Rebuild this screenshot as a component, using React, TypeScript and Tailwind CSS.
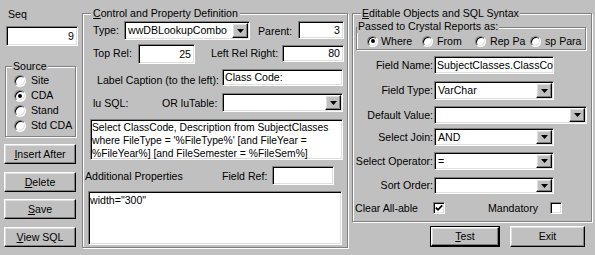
import React from "react";

const sunken =
  "bg-white border border-t-[#808080] border-l-[#808080] border-b-white border-r-white shadow-[inset_1px_1px_0_#000,inset_-1px_-1px_0_#dfdfdf]";
const raised =
  "bg-[#c0c0c0] border border-t-white border-l-white border-b-black border-r-black shadow-[inset_-1px_-1px_0_#808080,inset_1px_1px_0_#dfdfdf]";
const etched =
  "relative border border-[#808080] shadow-[inset_1px_1px_0_#fff,1px_1px_0_#fff]";

function Arrow() {
  return (
    <svg width="7" height="4" viewBox="0 0 7 4">
      <polygon points="0,0 7,0 3.5,4" fill="#000" />
    </svg>
  );
}

function Combo({ className, value }: { className: string; value?: string }) {
  return (
    <div className={`${sunken} ${className} flex p-[1px]`}>
      <div className="flex-1 flex items-center pl-[2px] overflow-hidden whitespace-nowrap">
        {value}
      </div>
      <div className={`${raised} w-[16px] flex items-center justify-center`}>
        <Arrow />
      </div>
    </div>
  );
}

function Radio({ checked, size }: { checked?: boolean; size: string }) {
  return (
    <div
      className={`${size} shrink-0 rounded-full bg-white border border-t-[#808080] border-l-[#808080] border-b-white border-r-white shadow-[inset_1px_1px_0_#000,inset_-1px_-1px_0_#dfdfdf] flex items-center justify-center`}
    >
      {checked && <div className="w-[4px] h-[4px] rounded-full bg-black" />}
    </div>
  );
}

function Check({ checked }: { checked?: boolean }) {
  return (
    <div className={`${sunken} w-[12px] h-[12px] shrink-0 flex items-center justify-center`}>
      {checked && (
        <svg width="8" height="8" viewBox="0 0 8 8">
          <path d="M0.8 3.6 L3 5.8 L7.2 1.4" stroke="#000" strokeWidth="1.8" fill="none" />
        </svg>
      )}
    </div>
  );
}

function Btn({ children, className }: { children: React.ReactNode; className: string }) {
  return (
    <div className={`${raised} ${className} flex items-center justify-center whitespace-nowrap`}>
      {children}
    </div>
  );
}

export default function App() {
  return (
    <div className="w-[595px] h-[255px] bg-[#c0c0c0] flex items-start overflow-hidden font-['Liberation_Sans',Arial,sans-serif] text-[10.6px] leading-[13px] text-black">
      {/* Left column */}
      <div className="ml-[4px] w-[74px] flex flex-col shrink-0">
        <div className="mt-[8px] pl-[4px] h-[13px]">Seq</div>
        <div
          className={`${sunken} mt-[5px] ml-[2px] w-[72px] h-[20px] flex items-center justify-end pr-[3px]`}
        >
          9
        </div>
        <div className={`${etched} mt-[20px] ml-[1px] w-[71px] h-[71px] flex flex-col pt-[6px] pl-[8px]`}>
          <span className="absolute top-[-7px] left-[6px] px-[1px] bg-[#c0c0c0]">Source</span>
          {["Site", "CDA", "Stand", "Std CDA"].map((s, i) => (
            <div key={s} className="h-[15px] flex items-center gap-[5px] whitespace-nowrap">
              <Radio checked={i === 1} size="w-[12px] h-[12px]" />
              {s}
            </div>
          ))}
        </div>
        <Btn className="mt-[7px] w-[72px] h-[20px]">
          <span>
            <u>I</u>nsert After
          </span>
        </Btn>
        <Btn className="mt-[8px] w-[72px] h-[20px]">
          <span>
            <u>D</u>elete
          </span>
        </Btn>
        <Btn className="mt-[7px] w-[72px] h-[20px]">
          <span>
            <u>S</u>ave
          </span>
        </Btn>
        <Btn className="mt-[8px] w-[72px] h-[20px]">
          <span>
            <u>V</u>iew SQL
          </span>
        </Btn>
      </div>

      {/* Middle group */}
      <div className={`${etched} ml-[4px] mt-[13px] w-[266px] h-[235px] flex flex-col shrink-0`}>
        <span className="absolute top-[-7px] left-[8px] px-[2px] bg-[#c0c0c0] whitespace-nowrap">
          <u>C</u>ontrol and Property Definition
        </span>
        {/* Row 1 */}
        <div className="mt-[7px] h-[19px] flex items-start">
          <div className="ml-[10px] w-[31px] mt-[3px]">Type:</div>
          <Combo className="w-[126px] h-[19px]" value="wwDBLookupCombo" />
          <div className="ml-[8px] w-[40px] mt-[4px]">Parent:</div>
          <div className={`${sunken} w-[46px] h-[18px] flex items-center justify-end pr-[3px]`}>3</div>
        </div>
        {/* Row 2 */}
        <div className="mt-[4px] h-[20px] flex items-start">
          <div className="ml-[10px] w-[45px] mt-[3px] whitespace-nowrap">Top Rel:</div>
          <div className={`${sunken} w-[57px] h-[20px] flex items-center justify-end pr-[3px]`}>25</div>
          <div className="ml-[16px] w-[71px] mt-[3px] whitespace-nowrap">Left Rel Right:</div>
          <div className={`${sunken} mt-[1px] w-[62px] h-[17px] flex items-center justify-end pr-[3px]`}>
            80
          </div>
        </div>
        {/* Row 3 */}
        <div className="mt-[5px] h-[17px] flex items-start">
          <div className="ml-[14px] w-[125px] mt-[5px] whitespace-nowrap">Label Caption (to the left):</div>
          <div className={`${sunken} w-[121px] h-[17px] flex items-center pl-[2px] whitespace-nowrap`}>
            Class Code:
          </div>
        </div>
        {/* Row 4 */}
        <div className="mt-[7px] h-[19px] flex items-start">
          <div className="ml-[10px] w-[69px] mt-[4px] whitespace-nowrap">lu SQL:</div>
          <div className="w-[60px] mt-[4px] whitespace-nowrap">OR luTable:</div>
          <Combo className="w-[121px] h-[19px]" />
        </div>
        {/* SQL */}
        <div className={`${sunken} mt-[7px] ml-[7px] w-[253px] h-[41px] pl-[1px] pt-[1px] overflow-hidden whitespace-nowrap text-[10.3px]`}>
          <div>Select ClassCode, Description from SubjectClasses</div>
          <div>where FileType = '%FileType%' [and FileYear =</div>
          <div>%FileYear%] [and FileSemester = %FileSem%]</div>
        </div>
        {/* Row 6 */}
        <div className="mt-[6px] h-[19px] flex items-start">
          <div className="ml-[2px] w-[137px] mt-[4px] whitespace-nowrap">Additional Properties</div>
          <div className="w-[50px] mt-[4px] whitespace-nowrap">Field Ref:</div>
          <div className={`${sunken} w-[62px] h-[19px]`} />
        </div>
        {/* Additional textarea */}
        <div className={`${sunken} mt-[6px] ml-[5px] w-[254px] h-[54px] pl-[1px] pt-[2px] whitespace-nowrap`}>
          width="300"
        </div>
      </div>

      {/* Right column */}
      <div className="ml-[4px] mt-[13px] flex flex-col shrink-0">
        <div className={`${etched} w-[240px] h-[209px] flex flex-col`}>
          <span className="absolute top-[-7px] left-[8px] px-[1px] bg-[#c0c0c0] whitespace-nowrap">
            <u>E</u>ditable Objects and SQL Syntax
          </span>
          {/* Passed group */}
          <div className={`${etched} mt-[13px] ml-[3px] w-[230px] h-[23px]`}>
            <span className="absolute top-[-8px] left-[0px] px-[1px] bg-[#c0c0c0] whitespace-nowrap">
              Passed to Crystal Reports as:
            </span>
            <div className="mt-[6px] pl-[10px] h-[14px] flex items-center whitespace-nowrap">
              <div className="w-[55px] flex items-center gap-[3px]">
                <Radio checked size="w-[11px] h-[11px]" />
                Where
              </div>
              <div className="w-[53px] flex items-center gap-[4px]">
                <Radio size="w-[11px] h-[11px]" />
                From
              </div>
              <div className="w-[55px] flex items-center gap-[4px]">
                <Radio size="w-[11px] h-[11px]" />
                Rep Pa
              </div>
              <div className="flex items-center gap-[4px]">
                <Radio size="w-[11px] h-[11px]" />
                sp Para
              </div>
            </div>
          </div>
          {/* Field rows */}
          <div className="mt-[6px] h-[18px] flex items-center">
            <div className="w-[80px] text-right whitespace-nowrap">Field Name:</div>
            <div className={`${sunken} ml-[1px] w-[120px] h-[18px] flex items-center pl-[2px] whitespace-nowrap`}>
              SubjectClasses.ClassCo
            </div>
          </div>
          <div className="mt-[7px] h-[19px] flex items-center">
            <div className="w-[80px] text-right whitespace-nowrap">Field Type:</div>
            <Combo className="ml-[1px] w-[120px] h-[19px]" value="VarChar" />
          </div>
          <div className="mt-[6px] h-[18px] flex items-center">
            <div className="w-[80px] text-right whitespace-nowrap">Default Value:</div>
            <Combo className="ml-[1px] w-[153px] h-[18px]" />
          </div>
          <div className="mt-[4px] h-[18px] flex items-center">
            <div className="w-[80px] text-right whitespace-nowrap">Select Join:</div>
            <Combo className="ml-[1px] w-[120px] h-[18px]" value="AND" />
          </div>
          <div className="mt-[6px] h-[18px] flex items-center">
            <div className="w-[80px] text-right whitespace-nowrap">Select Operator:</div>
            <Combo className="ml-[1px] w-[120px] h-[18px]" value="=" />
          </div>
          <div className="mt-[7px] h-[17px] flex items-center">
            <div className="w-[80px] text-right whitespace-nowrap">Sort Order:</div>
            <Combo className="ml-[1px] w-[120px] h-[17px]" />
          </div>
          <div className="mt-[8px] h-[12px] flex items-center whitespace-nowrap">
            <div className="ml-[2px] w-[78px]">Clear All-able</div>
            <Check checked />
            <div className="ml-[43px] w-[62px]">Mandatory</div>
            <Check />
          </div>
        </div>
        <div className="mt-[4px] flex">
          <div className="ml-[78px] w-[70px] h-[21px] border border-black flex">
            <div className={`${raised} flex-1 flex items-center justify-center`}>
              <span>
                <u>T</u>est
              </span>
            </div>
          </div>
          <Btn className="ml-[10px] w-[75px] h-[21px]">Exit</Btn>
        </div>
      </div>
    </div>
  );
}
